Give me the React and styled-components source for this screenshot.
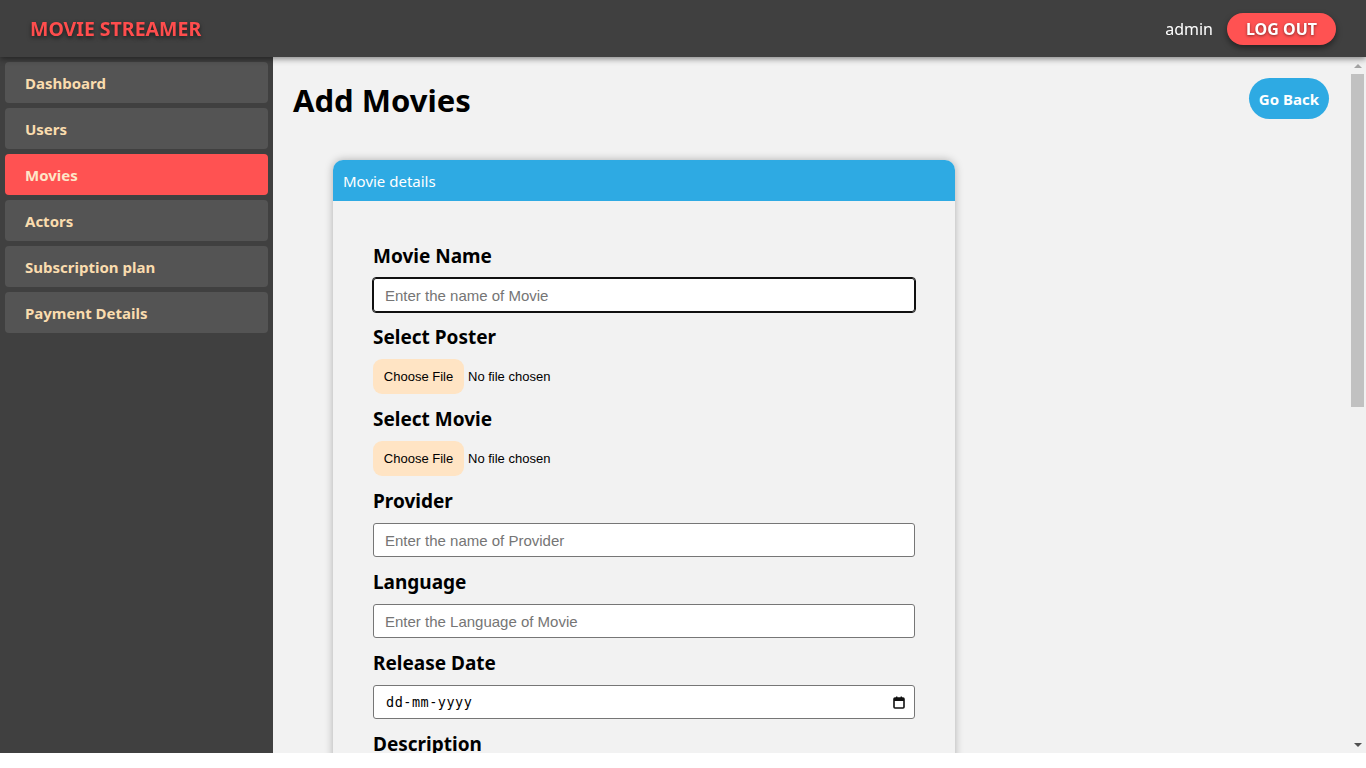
import styled, { createGlobalStyle } from "styled-components";

const GlobalStyle = createGlobalStyle`
  * {
    box-sizing: border-box;
  }
  body {
    margin: 0;
    background: #ffffff;
    font-family: "Noto Sans", "Open Sans", sans-serif;
  }
`;

const Page = styled.div`
  height: 753px;
  display: flex;
  flex-direction: column;
`;

const Header = styled.header`
  height: 57px;
  flex-shrink: 0;
  background-color: #404040;
  display: flex;
  align-items: center;
  justify-content: space-between;
  padding: 0 30px;
  box-shadow: 0 2px 6px rgba(0, 0, 0, 0.45);
  position: relative;
  z-index: 2;
`;

const Brand = styled.h2`
  margin: 0;
  font-size: 19.5px;
  font-weight: 700;
  color: #ff4d4d;
  text-shadow: 0 2px 4px rgba(0, 0, 0, 0.6);
`;

const UserBox = styled.div`
  display: flex;
  align-items: center;
  gap: 14px;
`;

const UserName = styled.span`
  color: #ffffff;
  font-size: 16px;
`;

const LogoutButton = styled.button`
  border: none;
  height: 32px;
  width: 109px;
  border-radius: 16px;
  background: #ff5252;
  color: #ffffff;
  font-family: inherit;
  font-size: 16px;
  font-weight: 700;
  text-shadow: 0 1px 3px rgba(0, 0, 0, 0.5);
  box-shadow: 0 3px 6px rgba(0, 0, 0, 0.45);
`;

const Body = styled.div`
  flex: 1;
  min-height: 0;
  display: flex;
`;

const Sidebar = styled.nav`
  width: 273px;
  flex-shrink: 0;
  background-color: #404040;
  padding: 5px;
  display: flex;
  flex-direction: column;
  gap: 5px;
`;

const NavItem = styled.a`
  display: flex;
  align-items: center;
  height: 41px;
  padding-left: 20px;
  border-radius: 4px;
  background: ${(p) => (p.$active ? "#ff5252" : "#545454")};
  color: ${(p) => (p.$active ? "#fde6c8" : "#fadcae")};
  font-size: 15px;
  font-weight: 700;
  text-decoration: none;
`;

const Main = styled.main`
  flex: 1;
  overflow-y: auto;
  scrollbar-width: none;
  background: #f2f2f2;
  padding: 20px 21px 60px 20px;
`;

const ScrollTrack = styled.div`
  width: 16px;
  flex-shrink: 0;
  background: #f1f1f1;
  display: flex;
  flex-direction: column;
  align-items: center;
`;

const ScrollArrow = styled.span`
  flex-shrink: 0;
  height: 17px;
  display: flex;
  align-items: center;
  justify-content: center;

  &::after {
    content: "";
    width: 0;
    height: 0;
    border-left: 4px solid transparent;
    border-right: 4px solid transparent;
    ${(p) =>
      p.$down
        ? "border-top: 4px solid #505050;"
        : "border-bottom: 4px solid #a3a3a3;"}
  }
`;

const ScrollThumb = styled.div`
  width: 13px;
  height: 333px;
  margin-left: -1px;
  background: #c1c1c1;
`;

const ScrollSpacer = styled.div`
  flex: 1;
`;

const TitleRow = styled.div`
  display: flex;
  align-items: flex-start;
  justify-content: space-between;
`;

const Title = styled.h1`
  margin: 0;
  font-size: 31px;
  line-height: 46px;
  font-weight: 700;
  color: #000000;
`;

const BackButton = styled.button`
  margin-top: 1px;
  border: none;
  height: 41px;
  padding: 0 10px;
  border-radius: 21px;
  background: #2eaae3;
  color: #ffffff;
  font-family: inherit;
  font-size: 15px;
  font-weight: 700;
`;

const Card = styled.section`
  width: 622px;
  margin: 37px 0 0 40px;
  border-radius: 10px;
  background: #f2f2f2;
  box-shadow: 0 0 9px rgba(0, 0, 0, 0.28);
  overflow: hidden;
`;

const CardHeader = styled.div`
  height: 41px;
  display: flex;
  align-items: center;
  padding-left: 10px;
  background: #2eaae3;
  color: #ffffff;
  font-size: 15px;
`;

const Form = styled.form`
  padding: 42px 40px 40px 40px;
`;

const Field = styled.div`
  margin-bottom: 12px;
`;

const Label = styled.label`
  display: block;
  font-size: 19px;
  font-weight: 700;
  line-height: 26px;
  margin-bottom: 9px;
  color: #000000;
`;

const TextInput = styled.input`
  display: block;
  width: 542px;
  height: 34px;
  padding: 0 11px;
  border: 1px solid #767676;
  border-radius: 3px;
  background: #ffffff;
  font-family: "Liberation Sans", Arial, sans-serif;
  font-size: 15px;
  color: #000000;

  &::placeholder {
    color: #757575;
  }
  &:focus {
    outline: 1px solid #111111;
    border-color: #111111;
  }
`;

const DateWrap = styled.div`
  position: relative;
  width: 542px;
`;

const DateInput = styled(TextInput)`
  padding-left: 12px;
  font-family: "DejaVu Sans Mono", monospace;
  font-size: 13.5px;
  letter-spacing: 0.5px;

  &::placeholder {
    color: #000000;
  }
`;

const CalendarIcon = styled.svg`
  position: absolute;
  right: 10px;
  top: 11px;
  pointer-events: none;
`;

const TextArea = styled.textarea`
  display: block;
  width: 542px;
  height: 110px;
  padding: 8px 11px;
  border: 1px solid #767676;
  border-radius: 3px;
  background: #ffffff;
  font-family: "Liberation Sans", Arial, sans-serif;
  font-size: 15px;
  resize: vertical;

  &::placeholder {
    color: #757575;
  }
`;

const Select = styled.select`
  display: block;
  width: 542px;
  height: 34px;
  padding: 0 8px;
  border: 1px solid #767676;
  border-radius: 3px;
  background: #ffffff;
  font-family: "Liberation Sans", Arial, sans-serif;
  font-size: 15px;
`;

const FileInput = styled.input`
  display: block;
  height: 35px;
  font-family: "Liberation Sans", Arial, sans-serif;
  font-size: 13px;
  color: #000000;

  &::file-selector-button {
    height: 35px;
    width: 91px;
    margin-right: 4px;
    border: none;
    border-radius: 9px;
    background: #ffe4c4;
    font-family: "Liberation Sans", Arial, sans-serif;
    font-size: 13px;
    color: #000000;
  }
`;

const SubmitButton = styled.button`
  margin-top: 18px;
  border: none;
  height: 40px;
  padding: 0 26px;
  border-radius: 20px;
  background: #ff5252;
  color: #ffffff;
  font-family: inherit;
  font-size: 16px;
  font-weight: 700;
`;

const menu = ["Dashboard", "Users", "Movies", "Actors", "Subscription plan", "Payment Details"];

export default function App() {
  return (
    <>
      <GlobalStyle />
      <Page>
        <Header>
          <Brand>MOVIE STREAMER</Brand>
          <UserBox>
            <UserName>admin</UserName>
            <LogoutButton>LOG OUT</LogoutButton>
          </UserBox>
        </Header>
        <Body>
          <Sidebar>
            {menu.map((item) => (
              <NavItem key={item} href="#" $active={item === "Movies"}>
                {item}
              </NavItem>
            ))}
          </Sidebar>
          <Main>
            <TitleRow>
              <Title>Add Movies</Title>
              <BackButton>Go Back</BackButton>
            </TitleRow>
            <Card>
              <CardHeader>Movie details</CardHeader>
              <Form onSubmit={(e) => e.preventDefault()}>
                <Field>
                  <Label>Movie Name</Label>
                  <TextInput type="text" placeholder="Enter the name of Movie" autoFocus />
                </Field>
                <Field>
                  <Label>Select Poster</Label>
                  <FileInput type="file" accept="image/*" />
                </Field>
                <Field>
                  <Label>Select Movie</Label>
                  <FileInput type="file" accept="video/*" />
                </Field>
                <Field>
                  <Label>Provider</Label>
                  <TextInput type="text" placeholder="Enter the name of Provider" />
                </Field>
                <Field>
                  <Label>Language</Label>
                  <TextInput type="text" placeholder="Enter the Language of Movie" />
                </Field>
                <Field>
                  <Label>Release Date</Label>
                  <DateWrap>
                    <DateInput type="text" placeholder="dd-mm-yyyy" />
                    <CalendarIcon width="12" height="13" viewBox="0 0 12 13">
                      <rect x="1" y="2" width="10" height="10" rx="1" fill="none" stroke="#111" strokeWidth="1.6" />
                      <rect x="1" y="2" width="10" height="3" fill="#111" />
                      <rect x="3" y="0.5" width="1.4" height="2.5" fill="#111" />
                      <rect x="7.6" y="0.5" width="1.4" height="2.5" fill="#111" />
                    </CalendarIcon>
                  </DateWrap>
                </Field>
                <Field>
                  <Label>Description</Label>
                  <TextArea placeholder="Enter the Description of Movie" />
                </Field>
                <Field>
                  <Label>Genre</Label>
                  <Select defaultValue="">
                    <option value="" disabled>
                      Select Genre
                    </option>
                    <option>Action</option>
                    <option>Comedy</option>
                    <option>Drama</option>
                  </Select>
                </Field>
                <Field>
                  <Label>Duration</Label>
                  <TextInput type="text" placeholder="Enter the Duration of Movie" />
                </Field>
                <Field>
                  <Label>Cast</Label>
                  <TextInput type="text" placeholder="Enter the Actors of Movie" />
                </Field>
                <SubmitButton type="submit">Add Movie</SubmitButton>
              </Form>
            </Card>
          </Main>
          <ScrollTrack>
            <ScrollArrow />
            <ScrollThumb />
            <ScrollSpacer />
            <ScrollArrow $down />
          </ScrollTrack>
        </Body>
      </Page>
    </>
  );
}
